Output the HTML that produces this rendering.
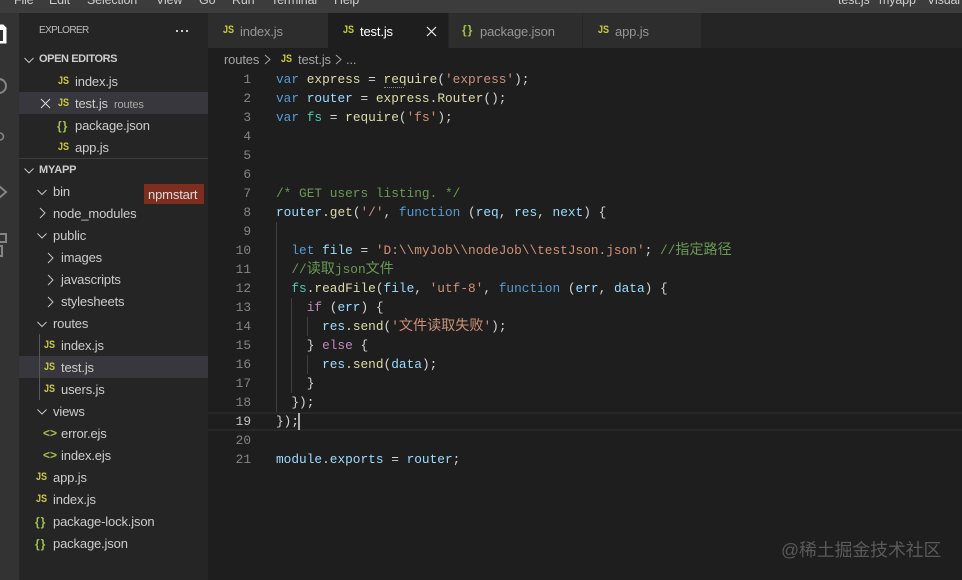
<!DOCTYPE html>
<html><head><meta charset="utf-8"><style>
html,body{margin:0;padding:0;background:#1e1e1e}
#r{position:relative;width:962px;height:580px;overflow:hidden;background:#1e1e1e;font-family:"Liberation Sans","Noto Sans CJK SC",sans-serif;font-size:13px;color:#ccc}
#r div,#r svg{position:absolute}
.t{white-space:nowrap;line-height:22px;height:22px;letter-spacing:-.15px}
.js{color:#cbcb41;font-weight:bold;font-size:11px;line-height:20px;white-space:nowrap;height:22px;transform:scaleX(.82);transform-origin:0 0}
.br{color:#a3bf4f;font-weight:bold;font-size:12px;line-height:20px;white-space:nowrap;letter-spacing:1px;height:22px}
.ej{color:#a3bf4f;font-weight:bold;font-size:12px;line-height:20px;white-space:nowrap;height:22px}
.ln{width:42px;left:209px;text-align:right;font:12.8px/19px "Liberation Mono",monospace;color:#858585;height:19px}
.c{left:276px;font:12.8px/19px "Liberation Mono","Noto Sans CJK SC",monospace;white-space:pre;color:#d4d4d4;height:19px}
.g{width:1px;background:#404040}
.z{font-size:14.1px;line-height:19px}
.k{color:#569cd6}.v{color:#9cdcfe}.f{color:#dcdcaa}.s{color:#ce9178}.m{color:#6a9955}.p{color:#c586c0}.u{color:#4ec9b0}
</style></head><body><div id="r">
<div style="left:0;top:0;width:962px;height:13px;background:#3c3c3c"></div>
<div class="t" style="left:14px;top:-11px;color:#ccc;font-size:12.5px">File</div>
<div class="t" style="left:49px;top:-11px;font-size:12.5px">Edit</div>
<div class="t" style="left:87px;top:-11px;font-size:12.5px">Selection</div>
<div class="t" style="left:156px;top:-11px;font-size:12.5px">View</div>
<div class="t" style="left:199px;top:-11px;font-size:12.5px">Go</div>
<div class="t" style="left:232px;top:-11px;font-size:12.5px">Run</div>
<div class="t" style="left:271px;top:-11px;font-size:12.5px">Terminal</div>
<div class="t" style="left:334px;top:-11px;font-size:12.5px">Help</div>
<div class="t" style="left:838px;top:-11px;font-size:12.5px">test.js</div>
<div class="t" style="left:879px;top:-11px;font-size:12.5px">myapp</div>
<div class="t" style="left:927px;top:-11px;font-size:12.5px">Visual S</div>

<div style="left:0;top:13px;width:19px;height:567px;background:#333"></div>
<svg style="left:0;top:13px" width="19" height="260" viewBox="0 0 19 260" fill="none">
<path d="M-4 12h7l3 3v15h-10z" fill="#fff" stroke="#fff"/><path d="M-4 17h7v11h-7z" fill="#333"/>
<circle cx="-1" cy="73" r="7" stroke="#858585" stroke-width="2"/>
<path d="M0 120a3 3 0 1 1 0 7" stroke="#858585" stroke-width="1.6"/>
<path d="M-1 173l7 6-7 6" stroke="#858585" stroke-width="2"/>
<rect x="-2" y="221" width="8" height="8" stroke="#858585" stroke-width="2"/><rect x="-6" y="233" width="8" height="10" stroke="#858585" stroke-width="2"/>
</svg>

<div style="left:19px;top:13px;width:189px;height:567px;background:#252526"></div>
<div class="t" style="left:39px;top:20px;font-size:10px;letter-spacing:-.6px;color:#bbb">EXPLORER</div>
<div style="left:176px;top:30px;width:2px;height:2px;background:#ccc;box-shadow:5px 0 #ccc,10px 0 #ccc"></div>

<svg style="left:19px;top:13px" width="189" height="567" viewBox="19 13 189 567" fill="none" stroke="#c5c5c5" stroke-width="1">
<path d="M24.500 58l4.500 4.500 4.500-4.500M24.500 168.500l4.500 4.500 4.500-4.500M37.500 190l4.500 4.500 4.500-4.500M37.500 233.500l4.500 4.500 4.500-4.500M37.500 322l4.500 4.500 4.500-4.500M37.500 409.500l4.500 4.500 4.500-4.500"/>
<path d="M40 208l5 5-5 5M48 253l5 5-5 5M48 275l5 5-5 5M48 297l5 5-5 5"/>
</svg>

<div class="t" style="left:39px;top:48px;font-size:11px;font-weight:bold;letter-spacing:-.4px;color:#ccc">OPEN EDITORS</div>
<div class="js" style="left:58px;top:71px">JS</div><div class="t" style="left:75px;top:71px">index.js</div>
<div style="left:19px;top:92px;width:189px;height:22px;background:#37373d"></div>
<svg style="left:40px;top:98px" width="11" height="11" fill="none" stroke="#ddd"><path d="M1 1l9 9M10 1l-9 9"/></svg>
<div class="js" style="left:58px;top:93px">JS</div><div class="t" style="left:75px;top:93px">test.js</div>
<div class="t" style="left:114px;top:94px;font-size:11px;color:#a8a8a8">routes</div>
<div class="br" style="left:57px;top:116px">{}</div><div class="t" style="left:75px;top:115px">package.json</div>
<div class="js" style="left:58px;top:137px">JS</div><div class="t" style="left:75px;top:137px">app.js</div>

<div style="left:19px;top:158px;width:189px;height:1px;background:#3d3d3e"></div>
<div class="t" style="left:39px;top:159px;font-size:11px;font-weight:bold;color:#ccc">MYAPP</div>
<div class="t" style="left:53px;top:181px">bin</div>
<div style="left:144px;top:184px;width:60px;height:20px;background:#7e2e1f"></div>
<div class="t" style="left:148px;top:184px;color:#ddd">npmstart</div>
<div class="t" style="left:53px;top:203px">node_modules</div>
<div class="t" style="left:53px;top:225px">public</div>
<div class="t" style="left:61px;top:247px">images</div>
<div class="t" style="left:61px;top:269px">javascripts</div>
<div class="t" style="left:61px;top:291px">stylesheets</div>
<div class="t" style="left:53px;top:313px">routes</div>
<div style="left:19px;top:356px;width:189px;height:22px;background:#37373d"></div>
<div style="left:39px;top:334px;width:1px;height:66px;background:#585858"></div>
<div class="js" style="left:44px;top:335px">JS</div><div class="t" style="left:61px;top:335px">index.js</div>
<div class="js" style="left:44px;top:357px">JS</div><div class="t" style="left:61px;top:357px">test.js</div>
<div class="js" style="left:44px;top:379px">JS</div><div class="t" style="left:61px;top:379px">users.js</div>
<div class="t" style="left:53px;top:401px">views</div>
<div class="ej" style="left:43px;top:423px">&lt;&gt;</div><div class="t" style="left:61px;top:423px">error.ejs</div>
<div class="ej" style="left:43px;top:445px">&lt;&gt;</div><div class="t" style="left:61px;top:445px">index.ejs</div>
<div class="js" style="left:36px;top:467px">JS</div><div class="t" style="left:53px;top:467px">app.js</div>
<div class="js" style="left:36px;top:489px">JS</div><div class="t" style="left:53px;top:489px">index.js</div>
<div class="br" style="left:35px;top:512px">{}</div><div class="t" style="left:53px;top:511px">package-lock.json</div>
<div class="br" style="left:35px;top:534px">{}</div><div class="t" style="left:53px;top:533px">package.json</div>

<div style="left:208px;top:13px;width:754px;height:35px;background:#252526"></div>
<div style="left:208px;top:13px;width:120px;height:35px;background:#2d2d2d"></div>
<div style="left:328px;top:13px;width:120px;height:35px;background:#1e1e1e"></div>
<div style="left:449px;top:13px;width:133px;height:35px;background:#2d2d2d"></div>
<div style="left:583px;top:13px;width:118px;height:35px;background:#2d2d2d"></div>
<div class="js" style="left:223px;top:20px">JS</div><div class="t" style="left:240px;top:21px;color:#969696">index.js</div>
<div class="js" style="left:343px;top:20px">JS</div><div class="t" style="left:360px;top:21px;color:#fff">test.js</div>
<svg style="left:426px;top:26px" width="11" height="11" fill="none" stroke="#eee" stroke-width="1.2"><path d="M1 1l9 9M10 1l-9 9"/></svg>
<div class="br" style="left:462px;top:20px">{}</div><div class="t" style="left:480px;top:21px;color:#969696">package.json</div>
<div class="js" style="left:598px;top:20px">JS</div><div class="t" style="left:615px;top:21px;color:#969696">app.js</div>

<div class="t" style="left:224px;top:49px;color:#a5a5a5">routes</div>
<svg style="left:264px;top:54px" width="8" height="11" fill="none" stroke="#a5a5a5"><path d="M1 1l5 4.500-5 4.500"/></svg>
<div class="js" style="left:281px;top:49px">JS</div><div class="t" style="left:298px;top:49px;color:#a5a5a5">test.js</div>
<svg style="left:335px;top:54px" width="8" height="11" fill="none" stroke="#a5a5a5"><path d="M1 1l5 4.500-5 4.500"/></svg>
<div class="t" style="left:346px;top:49px;color:#a5a5a5">...</div>

<div class="ln" style="top:70px">1</div><div class="ln" style="top:89px">2</div><div class="ln" style="top:108px">3</div><div class="ln" style="top:127px">4</div><div class="ln" style="top:146px">5</div><div class="ln" style="top:165px">6</div><div class="ln" style="top:184px">7</div><div class="ln" style="top:203px">8</div><div class="ln" style="top:222px">9</div><div class="ln" style="top:241px">10</div><div class="ln" style="top:260px">11</div><div class="ln" style="top:279px">12</div><div class="ln" style="top:298px">13</div><div class="ln" style="top:317px">14</div><div class="ln" style="top:336px">15</div><div class="ln" style="top:355px">16</div><div class="ln" style="top:374px">17</div><div class="ln" style="top:393px">18</div><div class="ln" style="top:412px;color:#c6c6c6">19</div><div class="ln" style="top:431px">20</div><div class="ln" style="top:450px">21</div>

<div class="g" style="left:276px;top:222px;height:190px"></div>
<div class="g" style="left:291px;top:298px;height:95px"></div>
<div class="g" style="left:307px;top:317px;height:19px"></div>
<div class="g" style="left:307px;top:355px;height:19px"></div>
<div style="left:208px;top:412px;width:754px;height:15px;border-top:2px solid #282828;border-bottom:2px solid #282828"></div>
<div style="left:298px;top:413px;width:1.500px;height:17px;background:#aeafad"></div>

<div class="c" style="top:70px"><span class="k">var</span> <span class="f">express</span> = <span class="f">require</span>(<span class="s">'express'</span>);</div>
<div class="c" style="top:89px"><span class="k">var</span> <span class="v">router</span> = <span class="f">express</span>.<span class="f">Router</span>();</div>
<div class="c" style="top:108px"><span class="k">var</span> <span class="u">fs</span> = <span class="f">require</span>(<span class="s">'fs'</span>);</div>
<div style="left:384px;top:87px;width:20px;height:1px;border-top:1px dotted #888"></div>
<div class="c" style="top:184px"><span class="m">/* GET users listing. */</span></div>
<div class="c" style="top:203px"><span class="v">router</span>.<span class="f">get</span>(<span class="s">'/'</span>, <span class="k">function</span> (<span class="v">req</span>, <span class="v">res</span>, <span class="v">next</span>) {</div>
<div class="c" style="top:241px">  <span class="k">let</span> <span class="v">file</span> = <span class="s">'D:\\myJob\\nodeJob\\testJson.json'</span>; <span class="m">//<span class="z">指定路径</span></span></div>
<div class="c" style="top:260px">  <span class="m">//<span class="z">读取</span>json<span class="z">文件</span></span></div>
<div class="c" style="top:279px">  <span class="u">fs</span>.<span class="f">readFile</span>(<span class="v">file</span>, <span class="s">'utf-8'</span>, <span class="k">function</span> (<span class="v">err</span>, <span class="v">data</span>) {</div>
<div class="c" style="top:298px">    <span class="p">if</span> (<span class="v">err</span>) {</div>
<div class="c" style="top:317px">      <span class="v">res</span>.<span class="f">send</span>(<span class="s">'<span class="z">文件读取失败</span>'</span>);</div>
<div class="c" style="top:336px">    } <span class="p">else</span> {</div>
<div class="c" style="top:355px">      <span class="v">res</span>.<span class="f">send</span>(<span class="v">data</span>);</div>
<div class="c" style="top:374px">    }</div>
<div class="c" style="top:393px">  });</div>
<div class="c" style="top:412px">});</div>
<div class="c" style="top:450px"><span class="v">module</span>.<span class="v">exports</span> = <span class="v">router</span>;</div>

<div class="t" style="left:781px;top:539px;font-size:17.800px;letter-spacing:0;color:#5a5a5a;line-height:22px">@稀土掘金技术社区</div>
</div></body></html>
